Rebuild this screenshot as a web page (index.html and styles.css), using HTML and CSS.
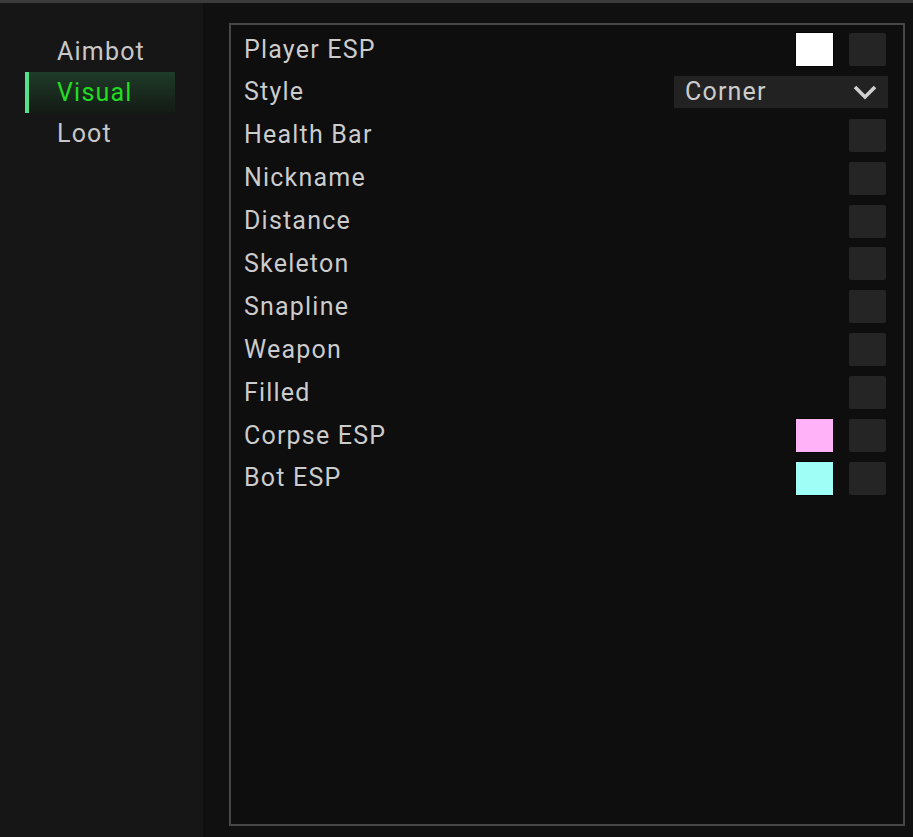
FILE: index.html
```html
<!DOCTYPE html>
<html lang="en">
<head>
  <meta charset="UTF-8">
  <meta name="viewport" content="width=device-width, initial-scale=1.0">
  <title>Menu - Visual</title>
  <link rel="stylesheet" href="styles.css">
</head>
<body>
  <div class="top-line"></div>
  <div class="window">
    <div class="sidebar">
      <div class="tab">Aimbot</div>
      <div class="tab active">Visual</div>
      <div class="tab">Loot</div>
    </div>
    <div class="main">
      <div class="panel">
        <div class="row">
          <span class="label">Player ESP</span>
          <span class="swatch swatch-white"></span>
          <span class="checkbox"></span>
        </div>
        <div class="row">
          <span class="label">Style</span>
          <div class="combo">
            <span>Corner</span>
            <svg class="chevron" width="24" height="16" viewBox="0 0 24 16">
              <path d="M2 3 L12 13 L22 3" fill="none" stroke="#cfcfcf" stroke-width="3.6"/>
            </svg>
          </div>
        </div>
        <div class="row">
          <span class="label">Health Bar</span>
          <span class="checkbox"></span>
        </div>
        <div class="row">
          <span class="label">Nickname</span>
          <span class="checkbox"></span>
        </div>
        <div class="row">
          <span class="label">Distance</span>
          <span class="checkbox"></span>
        </div>
        <div class="row">
          <span class="label">Skeleton</span>
          <span class="checkbox"></span>
        </div>
        <div class="row">
          <span class="label">Snapline</span>
          <span class="checkbox"></span>
        </div>
        <div class="row">
          <span class="label">Weapon</span>
          <span class="checkbox"></span>
        </div>
        <div class="row">
          <span class="label">Filled</span>
          <span class="checkbox"></span>
        </div>
        <div class="row">
          <span class="label">Corpse ESP</span>
          <span class="swatch swatch-pink"></span>
          <span class="checkbox"></span>
        </div>
        <div class="row">
          <span class="label">Bot ESP</span>
          <span class="swatch swatch-cyan"></span>
          <span class="checkbox"></span>
        </div>
      </div>
    </div>
  </div>
</body>
</html>
```

FILE: styles.css
```css
html, body {
  height: 100%;
}

body {
  margin: 0;
  padding: 0;
  background-color: #101010;
  color: #cccccc;
  font-family: 'Roboto', 'Liberation Sans', sans-serif;
  font-size: 25px;
  letter-spacing: 1.2px;
  display: flex;
  flex-direction: column;
  overflow: hidden;
}

.top-line {
  height: 3px;
  background: #3b3b3b;
}

.window {
  flex: 1;
  display: flex;
}

/* left tabs */
.sidebar {
  width: 203px;
  background: #161616;
  padding-top: 28px;
  box-sizing: border-box;
}

.tab {
  height: 41px;
  width: 150px;
  margin-left: 25px;
  padding-left: 32px;
  padding-bottom: 1px;
  box-sizing: border-box;
  display: flex;
  align-items: center;
  color: #c8c8c8;
}

.tab.active {
  color: #22dc22;
  background: linear-gradient(to bottom, #1f3b29, #131a14);
  border-left: 4px solid #55e08c;
  padding-left: 28px;
}

/* right panel */
.main {
  flex: 1;
  padding: 20px 8px 11px 26px;
  display: flex;
}

.panel {
  flex: 1;
  border: 2px solid #474747;
  background: #0e0e0e;
  padding: 8px 17px 0 13px;
  display: flex;
  flex-direction: column;
  gap: 9.9px;
}

.row {
  height: 33px;
  display: flex;
  align-items: center;
}

.label {
  flex: 1;
  padding-bottom: 1px;
  text-shadow: 0 0 1px #000;
}

.swatch {
  width: 37px;
  height: 33px;
  outline: 1px solid #050505;
  margin-right: 16px;
}

.swatch-white {
  background: #ffffff;
}

.swatch-pink {
  background: #ffb2f7;
}

.swatch-cyan {
  background: #9ffff6;
}

.checkbox {
  width: 37px;
  height: 33px;
  background: #252525;
  border-radius: 2px;
}

.combo {
  width: 214px;
  height: 32px;
  margin-right: -2px;
  background: #222222;
  box-sizing: border-box;
  padding: 0 11px 2px;
  display: flex;
  align-items: center;
  justify-content: space-between;
  color: #cccccc;
}

.chevron {
  display: block;
  margin-top: 2px;
}
```
